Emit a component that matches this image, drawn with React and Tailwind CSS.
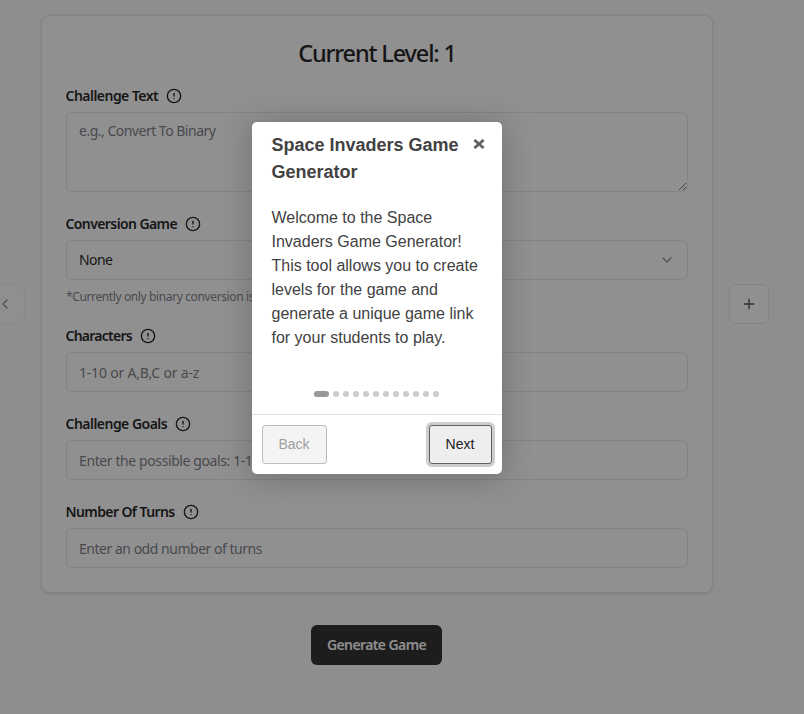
import { CircleAlert, ChevronDown, ChevronLeft, Plus } from "lucide-react";

const field = "w-full rounded-md border border-[#e4e4e7] bg-white px-3 text-[14px]";

function Label({ children, className }) {
  return (
    <div className="-ml-[0.5px] mb-2 flex h-4 items-center gap-2 text-[14px] leading-none font-semibold text-[#09090b]">
      <span className={"whitespace-nowrap " + className}>{children}</span>
      <CircleAlert size={16} strokeWidth={2} />
    </div>
  );
}

function TextField({ label, labelClass, placeholder, textClass }) {
  return (
    <div>
      <Label className={labelClass}>{label}</Label>
      <div className={field + " flex h-10 items-center text-[#71717a]"}>
        <span className={"whitespace-nowrap " + textClass}>{placeholder}</span>
      </div>
    </div>
  );
}

function Tour() {
  return (
    <div className="absolute top-[122px] left-[252px] flex h-[352px] w-[250px] flex-col rounded-[5px] bg-white font-['Liberation_Sans',Arial,sans-serif] text-[#424242] shadow-[0_3px_30px_rgba(33,33,33,0.3)]">
      <div className="flex items-start justify-between pt-2.5 pr-[17px] pl-[19.5px]">
        <h2 className="w-[195px] text-[18px] leading-[27px] font-bold">Space Invaders Game Generator</h2>
        <svg className="mt-[7px] h-2.5 w-3" viewBox="0 0 12 10" fill="none" stroke="#616161" strokeWidth="2.8">
          <path d="M1.4 1 L10.6 9 M10.6 1 L1.4 9" />
        </svg>
      </div>
      <p className="mt-5 w-[230px] pl-[19.5px] text-[16px] leading-6">
        Welcome to the Space Invaders Game Generator! This tool allows you to create levels for the game and generate a unique game link for your students to play.
      </p>
      <div className="mt-[41px] flex justify-center gap-1 pr-px">
        <span className="h-1.5 w-[15px] rounded-[10px] bg-[#999]" />
        {Array.from({ length: 11 }, (_, i) => (
          <span key={i} className="h-1.5 w-1.5 rounded-[10px] bg-[#ccc]" />
        ))}
      </div>
      <div className="mt-auto flex h-[60px] items-center justify-between border-t border-[#e0e0e0] px-2.5 text-[14px]">
        <button className="h-[39px] w-[65px] rounded-[3px] border border-[#bdbdbd] bg-[#f4f4f4] pr-px text-[#9e9e9e]">Back</button>
        <button className="h-[39px] w-[63px] rounded-[3px] border border-[#616161] bg-[#eee] pr-px text-[#212121] shadow-[0_0_0_3px_rgba(158,158,158,0.5)]">Next</button>
      </div>
    </div>
  );
}

export default function App() {
  return (
    <div className="relative h-[714px] w-[804px] overflow-hidden bg-[#fafafa] font-['Noto_Sans','Open_Sans',sans-serif]">
      <div className="-ml-[15px] flex items-center gap-4 pt-[15px]">
        <button className="flex h-10 w-10 shrink-0 items-center justify-center rounded-md border border-[#e4e4e7] bg-white text-[#09090b] opacity-50">
          <ChevronLeft size={16} />
        </button>
        <main className="h-[578px] w-[672px] shrink-0 rounded-lg border border-[#e4e4e7] bg-white px-6 pt-6 shadow-sm">
          <h1 className="mb-6 h-6 text-center text-[23.5px] leading-[27px] font-medium tracking-[-1.15px] text-[#09090b]">Current Level: 1</h1>
          <div className="flex flex-col gap-6">
            <div>
              <Label className="tracking-[-0.53px]">Challenge Text</Label>
              <textarea
                className={field + " block h-20 resize-y py-2 leading-5 tracking-[-0.5px] placeholder:text-[#71717a]"}
                placeholder="e.g., Convert To Binary"
              />
            </div>
            <div>
              <Label className="tracking-[-0.6px]">Conversion Game</Label>
              <div className={field + " flex h-10 items-center justify-between text-[#09090b]"}>
                <span className="pb-px tracking-[-0.6px]">None</span>
                <ChevronDown size={16} className="opacity-50" />
              </div>
              <p className="mt-2 h-4 text-[12px] leading-[18px] tracking-[-0.38px] whitespace-nowrap text-[#71717a]">
                *Currently only binary conversion is
              </p>
            </div>
            <TextField label="Characters" labelClass="tracking-[-0.75px]" placeholder="1-10 or A,B,C or a-z" textClass="tracking-[-0.2px]" />
            <TextField label="Challenge Goals" labelClass="tracking-[-0.53px]" placeholder="Enter the possible goals: 1-10" textClass="tracking-[-0.4px]" />
            <TextField label="Number Of Turns" labelClass="tracking-[-0.6px]" placeholder="Enter an odd number of turns" textClass="tracking-[-0.48px]" />
          </div>
        </main>
        <button className="flex h-10 w-10 shrink-0 items-center justify-center rounded-md border border-[#e4e4e7] bg-white text-[#3f3f46]">
          <Plus size={16} />
        </button>
      </div>
      <button className="mt-8 ml-[311px] block h-10 w-[131px] rounded-md bg-[#18181b] pb-0.5 text-[14px] font-semibold tracking-[-0.6px] whitespace-nowrap text-[#fafafa]">
        Generate Game
      </button>
      <div className="absolute inset-0 bg-[#212121]/50" />
      <Tour />
    </div>
  );
}
